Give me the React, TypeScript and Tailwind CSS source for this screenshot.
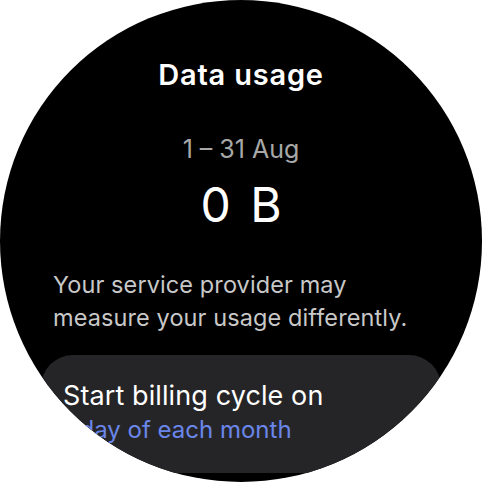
export default function App() {
  return (
    <div className="w-[482px] h-[482px] bg-white">
      <div
        className="relative w-[482px] h-[482px] rounded-full bg-black overflow-hidden flex flex-col items-center"
        style={{ fontFamily: 'Inter, Roboto, sans-serif' }}
      >
        {/* Title */}
        <h1 className="mt-[58px] h-[34px] leading-[34px] text-[29px] font-semibold text-white tracking-[0.8px]">
          Data usage
        </h1>

        {/* Period and total */}
        <p className="mt-[42px] h-[30px] leading-[30px] text-[25px] text-[#a8a8a8]">1 – 31 Aug</p>
        <p className="mt-[13px] h-[56px] leading-[56px] text-[48px] text-white tracking-[3px] pl-[3px]">0 B</p>

        {/* Note */}
        <p className="mt-[35px] self-start pl-[53px] text-[23.5px] leading-[33px] text-[#c8c8c8] tracking-[0.1px]">
          Your service provider may
          <br />
          measure your usage differently.
        </p>

        {/* Billing cycle card */}
        <div className="mt-[21px] w-[400px] h-[118px] rounded-[32px] bg-[#252528] pl-[22px] pt-[24px]">
          <p className="text-[27px] leading-[34px] text-white tracking-[0.1px]">Start billing cycle on</p>
          <p className="text-[24px] leading-[34px] text-[#6a86e8]">1 day of each month</p>
        </div>
      </div>
    </div>
  )
}
